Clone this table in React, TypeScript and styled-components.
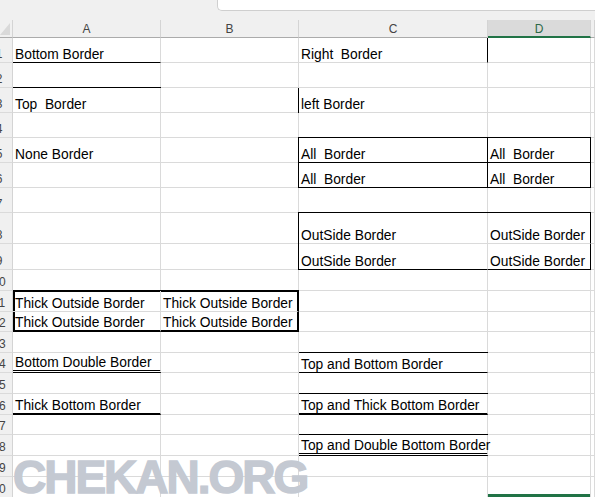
import React from 'react';
import styled, { createGlobalStyle } from 'styled-components';

type Edge = 'thin' | 'thick' | 'double';
interface CellSpec {
  text?: string;
  t?: Edge;
  b?: Edge;
  l?: Edge;
  r?: Edge;
  mark?: boolean;
}
interface RowSpec {
  h: number;
  cells?: CellSpec[];
}

const GRID = '#dadada';
const INK = '#000';
const GREEN = '#217346';
const COLS = '13px 148px 138px 189px 103px 1fr';

const Global = createGlobalStyle`
  html, body { margin: 0; padding: 0; background: #fff; overflow: hidden; }
  body { font-family: "Liberation Sans", Arial, sans-serif; }
`;

const Page = styled.div`
  position: relative;
  width: 595px;
  height: 497px;
  overflow: hidden;
  background: #fff;
`;

const TopStrip = styled.div`
  display: flex;
  height: 20px;
  background: #f0f0f0;
`;

const FormulaBox = styled.div`
  margin-left: 217px;
  flex: 1;
  height: 11px;
  box-sizing: border-box;
  background: #fff;
  border-left: 1px solid #cfcfcf;
  border-bottom: 1px solid #cfcfcf;
  border-bottom-left-radius: 5px;
`;

const HeaderRow = styled.div`
  display: grid;
  grid-template-columns: ${COLS};
  height: 18px;
  background: #f0f0f0;
`;

const HeaderCell = styled.div<{ $selected?: boolean }>`
  box-sizing: border-box;
  display: flex;
  align-items: center;
  justify-content: center;
  padding-top: 1px;
  font-size: 12px;
  color: ${p => (p.$selected ? '#2b6847' : '#444')};
  background: ${p => (p.$selected ? '#dadada' : 'transparent')};
  border-right: 1px solid #d4d4d4;
  border-bottom: ${p => (p.$selected ? `2px solid ${GREEN}` : '1px solid #ababab')};
`;

const CornerCell = styled.div`
  box-sizing: border-box;
  display: flex;
  align-items: flex-end;
  justify-content: flex-end;
  border-right: 1px solid #d4d4d4;
  border-bottom: 1px solid #ababab;
`;

const Row = styled.div<{ $h: number }>`
  display: grid;
  grid-template-columns: ${COLS};
  height: ${p => p.$h}px;
`;

const RowHeader = styled.div`
  box-sizing: border-box;
  display: flex;
  justify-content: flex-end;
  align-items: flex-end;
  overflow: hidden;
  padding-bottom: 1px;
  background: #f0f0f0;
  border-right: 1px solid #d4d4d4;
  border-bottom: 1px solid ${GRID};
  font-size: 12px;
  line-height: 14px;
  color: #444;
`;

const RowNum = styled.span`
  flex: 0 0 26px;
  text-align: center;
`;

const bottomBorder = (e?: Edge) =>
  e === 'thin'
    ? `1px solid ${INK}`
    : e === 'thick'
    ? `2px solid ${INK}`
    : e === 'double'
    ? `3px double ${INK}`
    : `1px solid ${GRID}`;

const rightBorder = (e?: Edge) =>
  e === 'thin' ? `1px solid ${INK}` : e === 'thick' ? `2px solid ${INK}` : `1px solid ${GRID}`;

const shadows = (p: { $t?: Edge; $l?: Edge; $mark?: boolean }) => {
  const s: string[] = [];
  if (p.$t === 'thin') s.push(`0 -1px 0 0 ${INK}`);
  if (p.$t === 'thick') s.push(`0 -1px 0 0 ${INK}`, `inset 0 1px 0 0 ${INK}`);
  if (p.$l === 'thin') s.push(`-1px 0 0 0 ${INK}`);
  if (p.$l === 'thick') s.push(`inset 2px 0 0 0 ${INK}`);
  if (p.$t === 'thin' && p.$l === 'thin') s.push(`-1px -1px 0 0 ${INK}`);
  if (p.$mark) s.push(`inset 0 -3px 0 0 ${GREEN}`);
  return s.length ? s.join(', ') : 'none';
};

const Cell = styled.div<{ $t?: Edge; $b?: Edge; $l?: Edge; $r?: Edge; $mark?: boolean }>`
  box-sizing: border-box;
  display: flex;
  align-items: flex-end;
  min-width: 0;
  padding: 0 0 0 2px;
  white-space: pre;
  font-size: 13.8px;
  line-height: 14px;
  color: #000;
  border-right: ${p => rightBorder(p.$r)};
  border-bottom: ${p => bottomBorder(p.$b)};
  box-shadow: ${p => shadows(p)};
`;

const Watermark = styled.div`
  position: absolute;
  left: 13px;
  top: 454px;
  font-family: "Liberation Sans", Arial, sans-serif;
  font-weight: 700;
  font-size: 46px;
  line-height: 46px;
  letter-spacing: -2px;
  color: #c4c9d2;
  -webkit-text-stroke: 1.4px #c4c9d2;
  pointer-events: none;
  white-space: nowrap;
`;

const ALL: CellSpec = { t: 'thin', b: 'thin', l: 'thin', r: 'thin' };
const TOB = 'Thick Outside Border';
const OSB = 'OutSide Border';

const ROWS: RowSpec[] = [
  { h: 25, cells: [{ text: 'Bottom Border', b: 'thin' }, {}, { text: 'Right  Border', r: 'thin' }] },
  { h: 25 },
  { h: 25, cells: [{ text: 'Top  Border', t: 'thin' }, {}, { text: 'left Border', l: 'thin' }] },
  { h: 25 },
  { h: 25, cells: [{ text: 'None Border' }, {}, { ...ALL, text: 'All  Border' }, { ...ALL, text: 'All  Border' }] },
  { h: 25, cells: [{}, {}, { ...ALL, text: 'All  Border' }, { ...ALL, text: 'All  Border' }] },
  { h: 25 },
  { h: 31, cells: [{}, {}, { text: OSB, t: 'thin', l: 'thin' }, { text: OSB, t: 'thin', r: 'thin' }] },
  { h: 26, cells: [{}, {}, { text: OSB, b: 'thin', l: 'thin' }, { text: OSB, b: 'thin', r: 'thin' }] },
  { h: 21 },
  { h: 21, cells: [{ text: TOB, t: 'thick', l: 'thick' }, { text: TOB, t: 'thick', r: 'thick' }] },
  { h: 20, cells: [{ text: TOB, b: 'thick', l: 'thick' }, { text: TOB, b: 'thick', r: 'thick' }] },
  { h: 21 },
  { h: 20, cells: [{ text: 'Bottom Double Border', b: 'double' }, {}, { text: 'Top and Bottom Border', t: 'thin', b: 'thin' }] },
  { h: 21 },
  { h: 21, cells: [{ text: 'Thick Bottom Border', b: 'thick' }, {}, { text: 'Top and Thick Bottom Border', t: 'thin', b: 'thick' }] },
  { h: 20 },
  { h: 21, cells: [{}, {}, { text: 'Top and Double Bottom Border', t: 'thin', b: 'double' }] },
  { h: 21 },
  { h: 21, cells: [{}, {}, {}, { mark: true }] },
];

const COL_NAMES = ['A', 'B', 'C', 'D', ''];

export default function App() {
  return (
    <>
      <Global />
      <Page>
        <TopStrip>
          <FormulaBox />
        </TopStrip>
        <HeaderRow>
          <CornerCell>
            <svg width="12" height="17" viewBox="0 0 12 17">
              <polygon points="0,15 10,3 10,15" fill="#d9d9d9" />
            </svg>
          </CornerCell>
          {COL_NAMES.map((c, i) => (
            <HeaderCell key={i} $selected={c === 'D'}>
              {c}
            </HeaderCell>
          ))}
        </HeaderRow>
        {ROWS.map((row, ri) => {
          const cells = Array.from({ length: 5 }, (_, ci) => (row.cells && row.cells[ci]) || {});
          return (
            <Row key={ri} $h={row.h}>
              <RowHeader>
                <RowNum>{ri + 1}</RowNum>
              </RowHeader>
              {cells.map((c, ci) => (
                <Cell key={ci} $t={c.t} $b={c.b} $l={c.l} $r={c.r} $mark={c.mark}>
                  {c.text}
                </Cell>
              ))}
            </Row>
          );
        })}
        <Watermark>CHEKAN.ORG</Watermark>
      </Page>
    </>
  );
}
